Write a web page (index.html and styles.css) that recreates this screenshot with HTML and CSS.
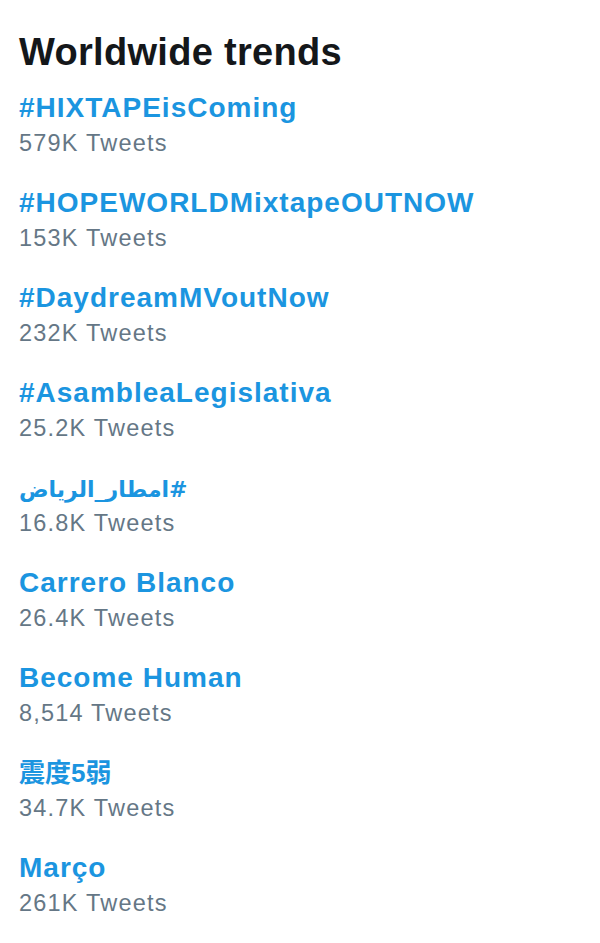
FILE: index.html
```html
<!DOCTYPE html>
<html>
<head>
<meta charset="utf-8">
<link rel="stylesheet" href="styles.css">
</head>
<body>
<div class="trends">
  <h2 class="title">Worldwide trends</h2>
  <ul class="list">
    <li class="item"><a class="name">#HIXTAPEisComing</a><div class="count">579K Tweets</div></li>
    <li class="item"><a class="name">#HOPEWORLDMixtapeOUTNOW</a><div class="count">153K Tweets</div></li>
    <li class="item"><a class="name">#DaydreamMVoutNow</a><div class="count">232K Tweets</div></li>
    <li class="item"><a class="name">#AsambleaLegislativa</a><div class="count">25.2K Tweets</div></li>
    <li class="item"><a class="name"><span class="rtl" dir="rtl">#امطار_الرياض</span></a><div class="count">16.8K Tweets</div></li>
    <li class="item"><a class="name">Carrero Blanco</a><div class="count">26.4K Tweets</div></li>
    <li class="item"><a class="name">Become Human</a><div class="count">8,514 Tweets</div></li>
    <li class="item"><a class="name cjk">震度5弱</a><div class="count">34.7K Tweets</div></li>
    <li class="item"><a class="name">Março</a><div class="count">261K Tweets</div></li>
  </ul>
</div>
</body>
</html>
```
FILE: styles.css
```css
html, body {
  margin: 0;
  padding: 0;
  background: #ffffff;
}
body {
  font-family: "Liberation Sans", Arial, "DejaVu Sans", "Noto Sans CJK JP", sans-serif;
}
.trends {
  padding: 30px 0 0 19px;
}
.title {
  margin: 0 0 17px 0;
  font-size: 38px;
  line-height: 44px;
  height: 44px;
  font-weight: bold;
  color: #14171a;
  letter-spacing: 0.3px;
}
.list {
  list-style: none;
  margin: 0;
  padding: 0;
  display: flex;
  flex-direction: column;
  gap: 28px;
}
.item {
  display: flex;
  flex-direction: column;
  gap: 3px;
}
.name {
  display: block;
  height: 34px;
  font-size: 28px;
  line-height: 34px;
  font-weight: bold;
  color: #1b95e0;
  letter-spacing: 1px;
  white-space: nowrap;
}
.rtl {
  font-family: "DejaVu Sans", sans-serif;
  font-size: 22px;
  letter-spacing: 0;
  font-weight: bold;
}
.cjk {
  font-family: "Liberation Sans", "Noto Sans CJK JP", sans-serif;
  font-size: 26px;
  letter-spacing: 0;
}
.count {
  height: 30px;
  font-size: 23.5px;
  line-height: 30px;
  color: #657786;
  letter-spacing: 1.2px;
}
```
